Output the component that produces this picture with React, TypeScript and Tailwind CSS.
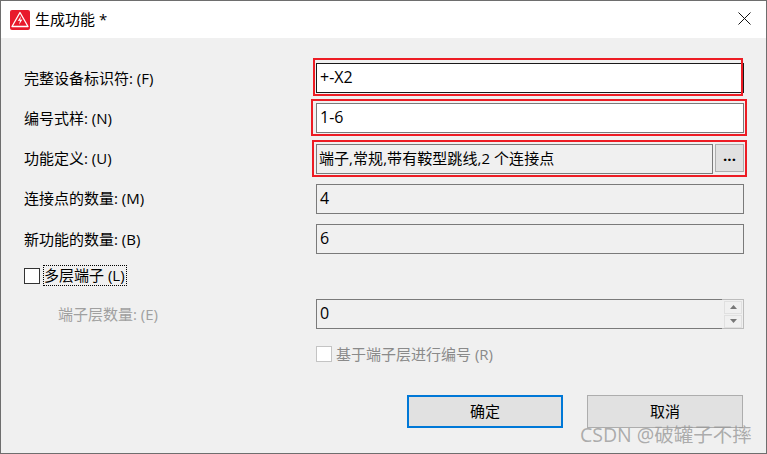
const fontStack = { fontFamily: '"Open Sans", "Noto Sans CJK SC", sans-serif' };

function Logo() {
  return (
    <svg width="20" height="20" viewBox="0 0 20 20" className="shrink-0">
      <rect x="0" y="0" width="20" height="20" rx="2" fill="#e8192c" />
      <path d="M10 2.5 L18 16.5 H2 Z" fill="none" stroke="#fff" strokeWidth="1.3" strokeLinejoin="round" />
      <path d="M11 6 L7.8 11 L10 10.8 L9 14.8 L12.4 9.6 L10.2 9.8 Z" fill="#fff" />
    </svg>
  );
}

function Marker({ className }: { className: string }) {
  return <div className={`absolute border-2 border-[#ed1c24] pointer-events-none ${className}`} />;
}

function Field({ value, className = "" }: { value: string; className?: string }) {
  return (
    <div className={`flex-1 h-full flex items-center pl-[3px] pb-[2px] border border-[#7a7a7a] text-[16px] text-black ${className}`}>
      {value}
    </div>
  );
}

function Row({ label, className, labelClass = "", children }: { label: string; className: string; labelClass?: string; children: React.ReactNode }) {
  return (
    <div className={`flex items-center h-[30px] ${className}`}>
      <div className={`w-[292px] text-[15px] text-black ${labelClass}`}>{label}</div>
      <div className="relative flex flex-1 h-full">{children}</div>
    </div>
  );
}

export default function App() {
  return (
    <div className="relative w-[767px] h-[454px] flex flex-col bg-[#f0f0f0] border border-[#6e6e6e] overflow-hidden" style={fontStack}>
      <div className="flex items-center h-[37px] shrink-0 bg-white pl-[9px] pr-[15px]">
        <Logo />
        <span className="ml-[5px] text-[15px] text-black">生成功能 *</span>
        <svg width="13" height="13" viewBox="0 0 13 13" className="ml-auto mb-[3px]">
          <path d="M0.5 0.5 L12.5 12.5 M12.5 0.5 L0.5 12.5" stroke="#111" strokeWidth="1" />
        </svg>
      </div>

      <div className="flex-1 flex flex-col pl-[23px] pr-[22px]">
        <Row label="完整设备标识符: (F)" className="mt-[25px]">
          <Field value="+-X2" className="bg-white !border-[#1a1a1a]" />
          <Marker className="-left-[3px] -top-[5px] right-[1px] -bottom-[3px]" />
        </Row>
        <Row label="编号式样: (N)" className="mt-[10px]">
          <Field value="1-6" className="bg-white" />
          <Marker className="-left-[5px] -top-[4px] -right-[3px] -bottom-[3px]" />
        </Row>
        <Row label="功能定义: (U)" className="mt-[11px]" labelClass="pb-[2px]">
          <Field value="端子,常规,带有鞍型跳线,2 个连接点" className="!text-[15px] !pl-[2px] mr-[1px] tracking-[0.06px]" />
          <button className="ml-[1px] w-[29px] h-[28px] border border-[#adadad] bg-[#e1e1e1] text-[15px] font-bold leading-none pb-[5px] text-black">...</button>
          <Marker className="-left-[4px] -top-[4px] -right-[3px] -bottom-[3px]" />
        </Row>
        <Row label="连接点的数量: (M)" className="mt-[10px]" labelClass="pb-[2px]">
          <Field value="4" />
        </Row>
        <Row label="新功能的数量: (B)" className="mt-[10px]">
          <Field value="6" />
        </Row>

        <div className="flex items-center h-[21px] mt-[11px]">
          <span className="w-4 h-4 border border-[#333] bg-white" />
          <span className="ml-[3px] h-[21px] w-[84px] flex items-center border border-dotted border-black text-[15px] text-black whitespace-nowrap">多层端子 (L)</span>
        </div>

        <div className="flex items-center h-[30px] mt-[13px]">
          <div className="w-[292px] pl-[34px] text-[15px] text-[#a0a0a0]">端子层数量: (E)</div>
          <div className="flex flex-1 h-full">
            <div className="flex-1 flex items-center pl-[3px] pb-[2px] border-y border-l border-[#7a7a7a] text-[16px] text-black">0</div>
            <div className="w-[22px] flex flex-col items-center justify-center gap-[1px] border-y border-r border-y-[#bcbcbc] border-r-[#bcbcbc] pl-[1px]">
              <span className="w-[18px] h-[13px] bg-[#f0f0f0] border border-[#e0e0e0] flex items-center justify-center">
                <svg width="7" height="4" viewBox="0 0 7 4"><path d="M3.5 0 L7 4 H0 Z" fill="#777" /></svg>
              </span>
              <span className="w-[18px] h-[13px] bg-[#f0f0f0] border border-[#e0e0e0] flex items-center justify-center">
                <svg width="7" height="4" viewBox="0 0 7 4"><path d="M0 0 H7 L3.5 4 Z" fill="#777" /></svg>
              </span>
            </div>
          </div>
        </div>

        <div className="flex items-center h-4 mt-[17px] pl-[292px]">
          <span className="w-4 h-4 border border-[#c4c4c4] bg-white" />
          <span className="ml-1 text-[15px] text-[#8a8a8a] whitespace-nowrap">基于端子层进行编号 (R)</span>
        </div>

        <div className="flex justify-end gap-6 mt-[33px] pr-[1px]">
          <button className="w-[156px] h-[33px] border-2 border-[#0078d7] bg-[#e1e1e1] text-[15px] text-black">确定</button>
          <button className="w-[156px] h-[33px] border border-[#adadad] bg-[#e1e1e1] text-[15px] text-black">取消</button>
        </div>
      </div>

      <span className="absolute left-[579px] top-[420px] text-[19.5px] leading-[28px] text-[#999999]/80 whitespace-nowrap">CSDN @破罐子不摔</span>
    </div>
  );
}
